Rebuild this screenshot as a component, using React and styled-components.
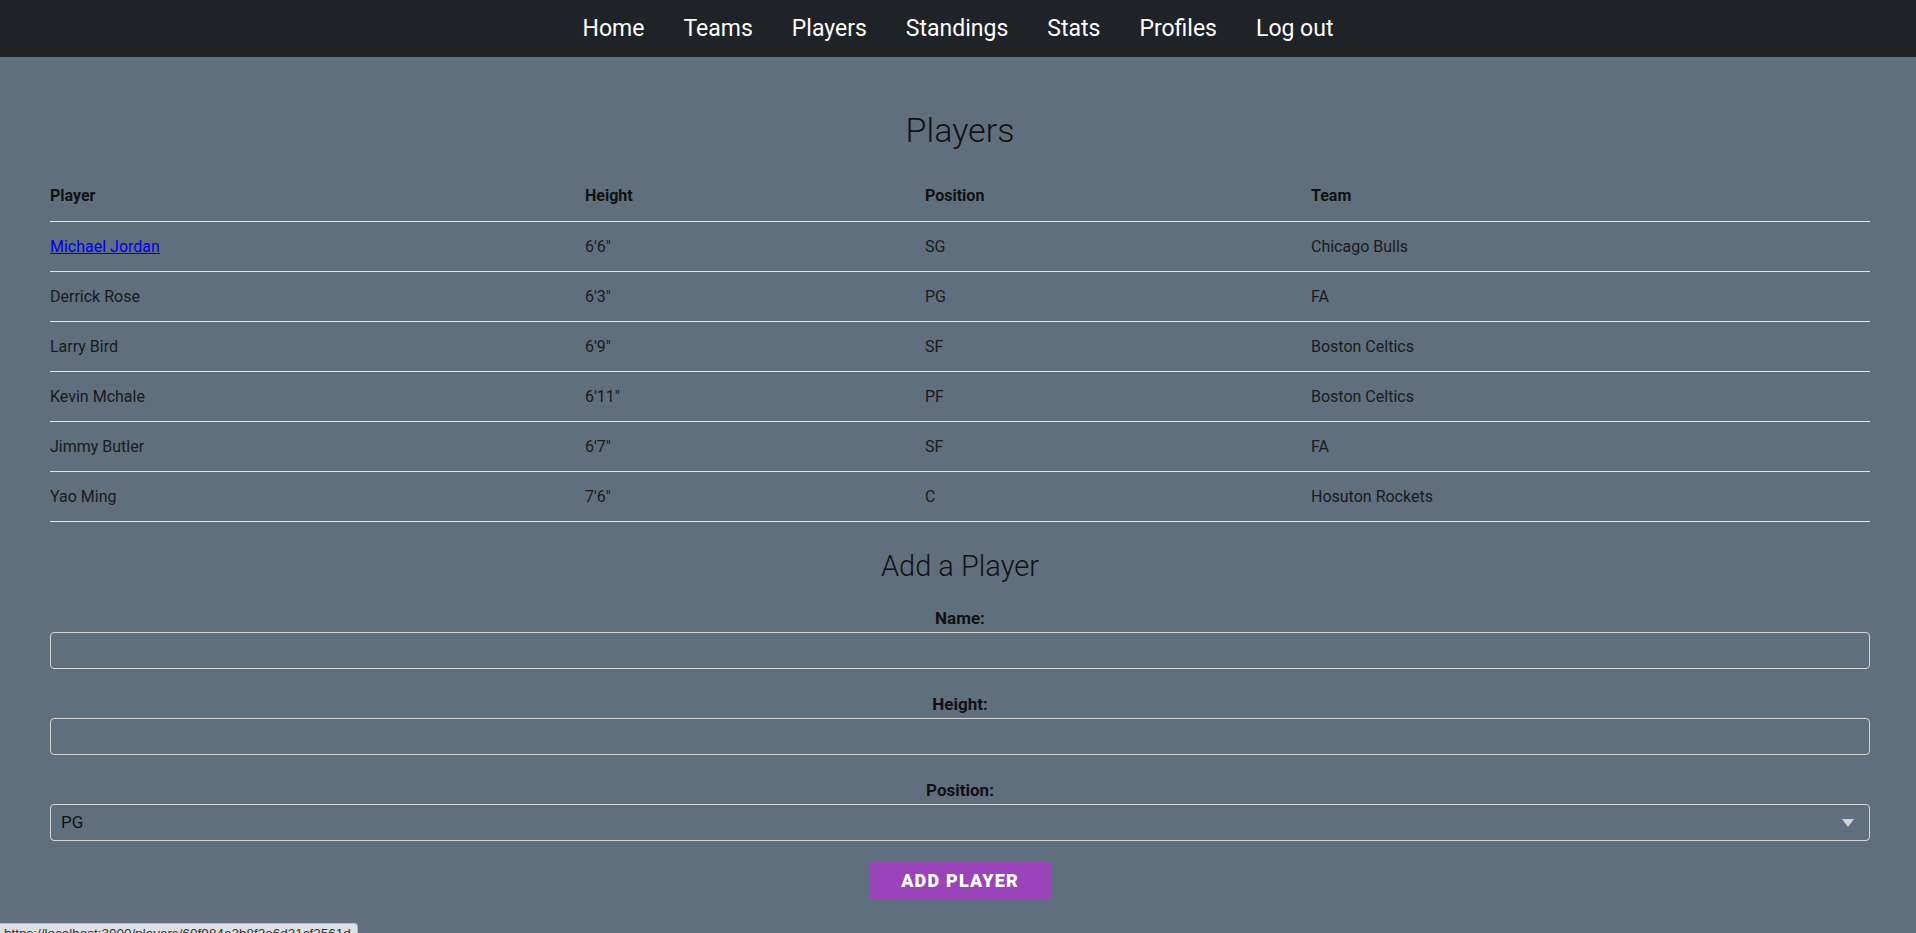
import React from 'react'
import styled, { createGlobalStyle } from 'styled-components'

const GlobalStyle = createGlobalStyle`
  html, body {
    margin: 0;
    padding: 0;
    background: #5f6f7e;
    font-family: Roboto, "Liberation Sans", sans-serif;
    color: #111;
  }
  * { box-sizing: border-box; }
`

const players = [
  { name: 'Michael Jordan', height: `6'6"`, position: 'SG', team: 'Chicago Bulls', link: true },
  { name: 'Derrick Rose', height: `6'3"`, position: 'PG', team: 'FA' },
  { name: 'Larry Bird', height: `6'9"`, position: 'SF', team: 'Boston Celtics' },
  { name: 'Kevin Mchale', height: `6'11"`, position: 'PF', team: 'Boston Celtics' },
  { name: 'Jimmy Butler', height: `6'7"`, position: 'SF', team: 'FA' },
  { name: 'Yao Ming', height: `7'6"`, position: 'C', team: 'Hosuton Rockets' }
]

const navItems = ['Home', 'Teams', 'Players', 'Standings', 'Stats', 'Profiles', 'Log out']

const columns = [
  { label: 'Player', width: 535 },
  { label: 'Height', width: 340 },
  { label: 'Position', width: 386 },
  { label: 'Team', width: 559 }
]

const Styled = {}

Styled.nav = styled.nav`
  height: 57px;
  background: #1f2226;
  display: flex;
  justify-content: center;
  align-items: center;
  gap: 39px;
`

Styled.navLink = styled.a`
  color: #fff;
  font-size: 23px;
  text-decoration: none;
  cursor: pointer;
`

Styled.main = styled.main`
  padding: 53px 46px 0 50px;
`

Styled.title = styled.h1`
  margin: 0;
  text-align: center;
  font-weight: 300;
  font-size: 34px;
  line-height: 41px;
`

Styled.subtitle = styled.h2`
  margin: 27px 0 0;
  text-align: center;
  font-weight: 300;
  font-size: 29px;
  line-height: 35px;
`

Styled.table = styled.table`
  width: 100%;
  margin-top: 20px;
  border-collapse: collapse;
  table-layout: fixed;
  font-size: 16px;
`

Styled.th = styled.th`
  width: ${(props) => props.$width}px;
  height: 50px;
  padding: 0;
  text-align: left;
  font-weight: 700;
  border-bottom: 1px solid #e4e6e8;
`

Styled.td = styled.td`
  height: 50px;
  padding: 0;
  color: #1a1a1a;
  border-bottom: 1px solid #e4e6e8;
`

Styled.link = styled.a`
  color: #0000ee;
  text-decoration: underline;
`

Styled.form = styled.form`
  display: flex;
  flex-direction: column;
  align-items: stretch;
  margin-top: 24px;
`

Styled.field = styled.div`
  display: flex;
  flex-direction: column;
  margin-top: ${(props) => (props.$first ? 0 : 25)}px;
`

Styled.label = styled.label`
  text-align: center;
  font-weight: 700;
  font-size: 17px;
  line-height: 20px;
  margin-bottom: 4px;
`

Styled.input = styled.input`
  height: 37px;
  background: transparent;
  border: 1px solid #d4d6d8;
  border-radius: 4px;
  padding: 0 10px;
  font: inherit;
  font-size: 16px;
  color: #111;
  outline: none;
`

Styled.selectWrap = styled.div`
  position: relative;
`

Styled.select = styled.select`
  width: 100%;
  height: 37px;
  appearance: none;
  background: transparent;
  border: 1px solid #d4d6d8;
  border-radius: 4px;
  padding: 0 10px;
  font-family: Roboto, "Liberation Sans", sans-serif;
  font-size: 17px;
  color: #111;
  outline: none;
`

Styled.arrow = styled.span`
  position: absolute;
  right: 16px;
  top: 15px;
  width: 0;
  height: 0;
  border-left: 6px solid transparent;
  border-right: 6px solid transparent;
  border-top: 8px solid #d0d2d4;
  pointer-events: none;
`

Styled.button = styled.button`
  align-self: center;
  margin-top: 21px;
  width: 182px;
  height: 37px;
  background: #9a43ba;
  color: #fff;
  border: none;
  border-radius: 3px;
  font-family: Roboto, "Liberation Sans", sans-serif;
  font-weight: 900;
  font-size: 18px;
  letter-spacing: 1.2px;
  text-transform: uppercase;
`

Styled.status = styled.div`
  position: fixed;
  left: 0;
  bottom: -9px;
  height: 19px;
  padding: 2px 6px 0 4px;
  background: #dde0e4;
  border: 1px solid #b9bcc0;
  border-left: none;
  border-top-right-radius: 4px;
  font-family: "Liberation Sans", sans-serif;
  font-size: 13.5px;
  line-height: 16px;
  color: #333;
  white-space: nowrap;
`

const App = () => {
  return (
    <>
      <GlobalStyle />
      <Styled.nav>
        {navItems.map((item) => (
          <Styled.navLink key={item}>{item}</Styled.navLink>
        ))}
      </Styled.nav>

      <Styled.main>
        <Styled.title>Players</Styled.title>

        <Styled.table>
          <thead>
            <tr>
              {columns.map((column) => (
                <Styled.th key={column.label} $width={column.width}>{column.label}</Styled.th>
              ))}
            </tr>
          </thead>
          <tbody>
            {players.map((player) => (
              <tr key={player.name}>
                <Styled.td>
                  {player.link ? <Styled.link href="#">{player.name}</Styled.link> : player.name}
                </Styled.td>
                <Styled.td>{player.height}</Styled.td>
                <Styled.td>{player.position}</Styled.td>
                <Styled.td>{player.team}</Styled.td>
              </tr>
            ))}
          </tbody>
        </Styled.table>

        <Styled.subtitle>Add a Player</Styled.subtitle>

        <Styled.form onSubmit={(e) => e.preventDefault()}>
          <Styled.field $first>
            <Styled.label htmlFor="name">Name:</Styled.label>
            <Styled.input id="name" type="text" />
          </Styled.field>
          <Styled.field>
            <Styled.label htmlFor="height">Height:</Styled.label>
            <Styled.input id="height" type="text" />
          </Styled.field>
          <Styled.field>
            <Styled.label htmlFor="position">Position:</Styled.label>
            <Styled.selectWrap>
              <Styled.select id="position" defaultValue="PG">
                <option>PG</option>
                <option>SG</option>
                <option>SF</option>
                <option>PF</option>
                <option>C</option>
              </Styled.select>
              <Styled.arrow />
            </Styled.selectWrap>
          </Styled.field>
          <Styled.button type="submit">Add Player</Styled.button>
        </Styled.form>
      </Styled.main>

      <Styled.status>https://localhost:3000/players/60f984e2b8f2e6d21cf2561d</Styled.status>
    </>
  )
}

export default App
